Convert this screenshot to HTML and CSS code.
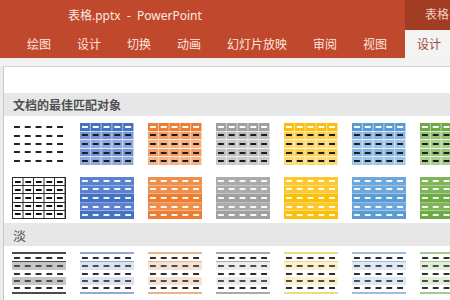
FILE: index.html
```html
<!DOCTYPE html>
<html lang="zh">
<head>
<meta charset="utf-8">
<title>表格.pptx - PowerPoint</title>
<link rel="stylesheet" href="styles.css">
</head>
<body>
<header class="titlebar">
  <span class="title">表格.pptx&nbsp; - &nbsp;PowerPoint</span>
  <div class="ctx">表格</div>
</header>
<nav class="tabs">
  <span class="tab">绘图</span>
  <span class="tab">设计</span>
  <span class="tab">切换</span>
  <span class="tab">动画</span>
  <span class="tab">幻灯片放映</span>
  <span class="tab">审阅</span>
  <span class="tab">视图</span>
  <span class="tab active">设计</span>
</nav>
<div class="strip"></div>
<section class="panel">
  <div class="blank"></div>
  <div class="sect">文档的最佳匹配对象</div>
  <div class="grid first">
    <div class="tile plain"><span></span><span></span><span></span><span></span><span></span></div>
    <div class="tile med c-blue"><span></span><span></span><span></span><span></span><span></span></div>
    <div class="tile med c-orange"><span></span><span></span><span></span><span></span><span></span></div>
    <div class="tile med c-gray"><span></span><span></span><span></span><span></span><span></span></div>
    <div class="tile med c-yellow"><span></span><span></span><span></span><span></span><span></span></div>
    <div class="tile med c-lblue"><span></span><span></span><span></span><span></span><span></span></div>
    <div class="tile med c-green"><span></span><span></span><span></span><span></span><span></span></div>

    <div class="tile gridded"><span></span><span></span><span></span><span></span><span></span></div>
    <div class="tile dark c-blue"><span></span><span></span><span></span><span></span><span></span></div>
    <div class="tile dark c-orange"><span></span><span></span><span></span><span></span><span></span></div>
    <div class="tile dark c-gray"><span></span><span></span><span></span><span></span><span></span></div>
    <div class="tile dark c-yellow"><span></span><span></span><span></span><span></span><span></span></div>
    <div class="tile dark c-lblue"><span></span><span></span><span></span><span></span><span></span></div>
    <div class="tile dark c-green"><span></span><span></span><span></span><span></span><span></span></div>
  </div>
  <div class="sect light-label">淡</div>
  <div class="grid second">
    <div class="tile light c-black"><span></span><span></span><span></span><span></span><span></span></div>
    <div class="tile light c-blue"><span></span><span></span><span></span><span></span><span></span></div>
    <div class="tile light c-orange"><span></span><span></span><span></span><span></span><span></span></div>
    <div class="tile light c-gray"><span></span><span></span><span></span><span></span><span></span></div>
    <div class="tile light c-yellow"><span></span><span></span><span></span><span></span><span></span></div>
    <div class="tile light c-lblue"><span></span><span></span><span></span><span></span><span></span></div>
    <div class="tile light c-green"><span></span><span></span><span></span><span></span><span></span></div>
  </div>
</section>
</body>
</html>
```
FILE: styles.css
```css
* { box-sizing: border-box; }
html, body {
  margin: 0;
  width: 450px;
  height: 300px;
  overflow: hidden;
}
body {
  background: #ebebeb;
  font-family: "Noto Sans", "Noto Sans CJK SC", sans-serif;
}

.titlebar {
  height: 30px;
  background: #c0482c;
  display: flex;
  align-items: center;
  padding-left: 68px;
  color: #fbe9e3;
  font-size: 12px;
}
.title { flex: 1; white-space: nowrap; }
.ctx {
  width: 45px;
  height: 30px;
  background: #a23c22;
  color: #f1cfc4;
  padding-left: 20px;
  line-height: 30px;
  white-space: nowrap;
}

.tabs {
  height: 28px;
  background: #c0482c;
  display: flex;
  align-items: stretch;
  padding-left: 15px;
  gap: 2px;
  color: #fbe6df;
  font-size: 12px;
}
.tab {
  padding: 0 12px;
  display: flex;
  align-items: center;
  white-space: nowrap;
}
.tab.active {
  margin-left: 4px;
  background: #f3f3f3;
  color: #9a4631;
  flex: 1;
}

.strip { height: 8px; background: #f1f1f1; }

.panel {
  margin-left: 3px;
  width: 470px;
  height: 234px;
  background: #fff;
  border-left: 1px solid #c9c9c9;
  border-top: 1px solid #d4d4d4;
  overflow: hidden;
}
.blank { height: 26px; }
.sect {
  height: 23px;
  background: #e7e7e7;
  color: #4f4f4f;
  font-size: 12px;
  font-weight: 600;
  padding-left: 9px;
  display: flex;
  align-items: center;
}
.sect.light-label { font-weight: 400; font-size: 13px; }
.grid {
  display: grid;
  grid-template-columns: repeat(7, 54px);
  column-gap: 14px;
  row-gap: 12px;
  padding-left: 8px;
}
.grid.first { padding-top: 7px; padding-bottom: 4px; }
.grid.second { padding-top: 6px; }

/* colour sets */
.c-blue   { --a: #4571c4; --d: #5a82cf; --b1: #7394d6; --b2: #8ea9df; --ln: #8eaadb; --t: #dbe3f2; }
.c-orange { --a: #ed7d31; --d: #f08e4c; --b1: #f29c62; --b2: #f5b283; --ln: #eab48b; --t: #f6e2d2; }
.c-gray   { --a: #a0a0a0; --d: #ababab; --b1: #bcbcbc; --b2: #c9c9c9; --ln: #a9a9a9; --t: #ececec; }
.c-yellow { --a: #fbbf0a; --d: #fcc82e; --b1: #fccf4a; --b2: #fdda70; --ln: #f2d987; --t: #fdf1cb; }
.c-lblue  { --a: #5b9bd5; --d: #6ea7db; --b1: #86b4e0; --b2: #9fc4e8; --ln: #9dbfdc; --t: #dde9f4; }
.c-green  { --a: #6caa45; --d: #7db558; --b1: #93c275; --b2: #a9cf8f; --ln: #a6c98e; --t: #e1eed8; }
.c-black  { --ln: #4a4a4a; --t: #c6c6c6; }

/* tiles */
.tile {
  width: 54px;
  height: 42px;
  display: flex;
  flex-direction: column;
}
.tile span {
  --dc: #222;
  flex: 1;
  display: block;
  background-image: linear-gradient(90deg, transparent 2px, var(--dc) 2px, var(--dc) 8px, transparent 8px);
  background-size: 10.8px 2px;
  background-repeat: repeat-x;
  background-position: 0 50%;
}

/* row 1: medium style with header */
.med span {
  --vl: rgba(255, 255, 255, 0.55);
  --dc: #1c1c1c;
  background-color: var(--b1);
  border-bottom: 1px solid rgba(255, 255, 255, 0.75);
  background-image:
    linear-gradient(90deg, transparent 2px, var(--dc) 2px, var(--dc) 8px, transparent 8px),
    linear-gradient(90deg, transparent 10px, var(--vl) 10px);
  background-size: 10.8px 2px, 10.8px 100%;
  background-position: 0 50%, 0 0;
}
.med span:nth-child(odd) { background-color: var(--b2); }
.med span:first-child { background-color: var(--a); --dc: #fff; }
.med span:last-child { border-bottom: 0; }

/* row 2 first: full grid */
.gridded { border: 1px solid #2a2a2a; }
.gridded span {
  --dc: #111;
  border-bottom: 1px solid #2a2a2a;
  background-image:
    linear-gradient(90deg, transparent 2px, var(--dc) 2px, var(--dc) 8px, transparent 8px),
    linear-gradient(90deg, transparent 9.6px, #2a2a2a 9.6px);
  background-size: 10.5px 2px, 10.5px 100%;
  background-position: 0 50%, 0 0;
}
.gridded span:last-child { border-bottom: 0; }

/* row 2: dark filled */
.dark span {
  --dc: rgba(255, 255, 255, 0.92);
  background-color: var(--a);
  border-bottom: 1px solid rgba(255, 255, 255, 0.35);
}
.dark span:nth-child(even) { background-color: var(--d); }
.dark span:first-child { background-color: var(--d); }
.dark span:last-child { border-bottom: 0; }

/* row 3: light banded */
.light {
  border-top: 2px solid var(--ln);
  border-bottom: 2px solid var(--ln);
}
.light span { --dc: #2e2e2e; }
.light span:first-child { border-bottom: 1px solid var(--ln); }
.light span:nth-child(2),
.light span:nth-child(4) { background-color: var(--t); --dc: #4c4c4c; }
```
